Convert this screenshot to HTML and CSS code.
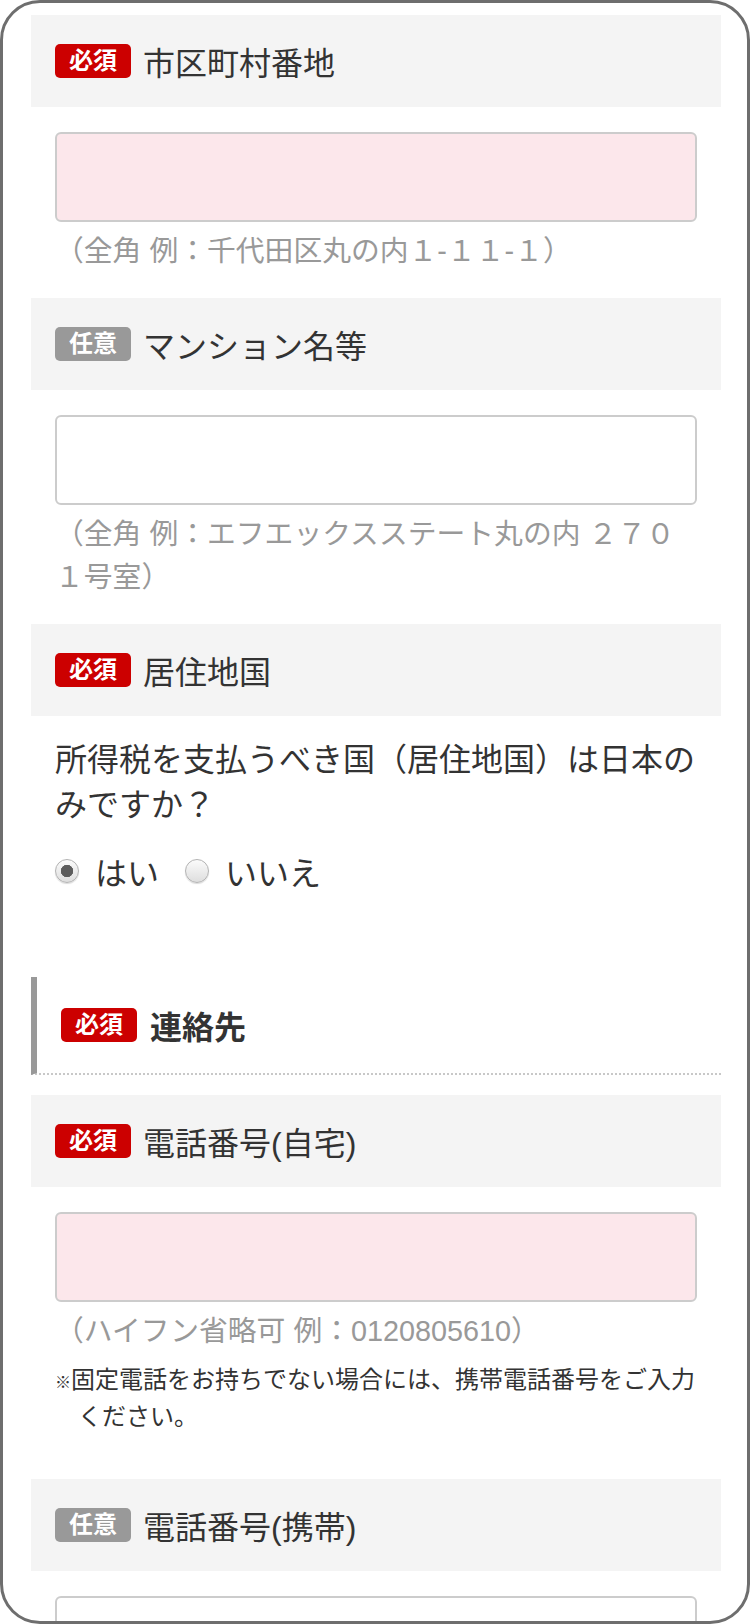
FILE: index.html
```html
<!DOCTYPE html>
<html lang="ja">
<head>
<meta charset="utf-8">
<title>フォーム</title>
<link rel="stylesheet" href="styles.css">
</head>
<body>
<div class="device">
  <div class="form">
    <section class="field">
      <div class="field-head"><span class="badge badge-req">必須</span><span class="field-label">市区町村番地</span></div>
      <div class="field-body">
        <input class="text-input text-input-req" type="text">
        <p class="hint">（全角 例：千代田区丸の内１-１１-１）</p>
      </div>
    </section>

    <section class="field">
      <div class="field-head"><span class="badge badge-opt">任意</span><span class="field-label">マンション名等</span></div>
      <div class="field-body">
        <input class="text-input" type="text">
        <p class="hint">（全角 例：エフエックスステート丸の内 ２７０<wbr>１号室）</p>
      </div>
    </section>

    <section class="field">
      <div class="field-head"><span class="badge badge-req">必須</span><span class="field-label">居住地国</span></div>
      <div class="field-body">
        <p class="question">所得税を支払うべき国（居住地国）は日本のみですか？</p>
        <div class="radio-row">
          <label class="radio-opt"><input class="radio" type="radio" name="res" checked><span>はい</span></label>
          <label class="radio-opt"><input class="radio" type="radio" name="res"><span>いいえ</span></label>
        </div>
      </div>
    </section>

    <h2 class="section-title"><span class="badge badge-req">必須</span><span class="section-title-text">連絡先</span></h2>

    <section class="field">
      <div class="field-head"><span class="badge badge-req">必須</span><span class="field-label">電話番号(自宅)</span></div>
      <div class="field-body">
        <input class="text-input text-input-req" type="text">
        <p class="hint">（ハイフン省略可 例：0120805610）</p>
        <p class="note"><span class="note-mark">※</span>固定電話をお持ちでない場合には、携帯電話番号をご入力ください。</p>
      </div>
    </section>

    <section class="field">
      <div class="field-head"><span class="badge badge-opt">任意</span><span class="field-label">電話番号(携帯)</span></div>
      <div class="field-body">
        <input class="text-input" type="text">
      </div>
    </section>
  </div>
</div>
</body>
</html>
```

FILE: styles.css
```css
html, body {
  margin: 0;
  padding: 0;
  background: #ffffff;
}

body {
  font-family: "Liberation Sans", "Noto Sans CJK JP", sans-serif;
  color: #333333;
}

.device {
  width: 750px;
  height: 1624px;
  box-sizing: border-box;
  border: 3px solid #6e6e6e;
  border-radius: 40px;
  overflow: hidden;
  background: #ffffff;
}

.form {
  padding: 12px 26px 0 28px;
}

.field {
  margin: 0 0 25px;
}

.field-head {
  height: 92px;
  box-sizing: border-box;
  padding: 0 24px;
  background: #f4f4f4;
  display: flex;
  align-items: center;
}

.badge {
  display: inline-flex;
  align-items: center;
  justify-content: center;
  height: 34px;
  padding: 0 14px;
  border-radius: 5px;
  color: #ffffff;
  font-size: 24px;
  font-weight: bold;
  line-height: 34px;
  flex: none;
}

.badge-req {
  background: #cc0000;
}

.badge-opt {
  background: #999999;
}

.field-label {
  margin-left: 12px;
  font-size: 32px;
  color: #333333;
}

.field-body {
  padding: 0 24px;
}

.text-input {
  display: block;
  width: 100%;
  height: 90px;
  box-sizing: border-box;
  margin: 25px 0 0;
  border: 2px solid #cccccc;
  border-radius: 6px;
  background: #ffffff;
  -webkit-appearance: none;
  appearance: none;
  outline: none;
  font-size: 32px;
}

.text-input-req {
  background: #fce7eb;
}

.hint {
  margin: 8px 0 0;
  font-size: 28.8px;
  line-height: 43px;
  color: #999999;
}

.note {
  margin: 10px 0 0;
  padding: 0 0 20px 23px;
  text-indent: -23px;
  font-size: 24px;
  line-height: 34px;
  color: #333333;
}

.note-mark {
  font-size: 16px;
}

.question {
  margin: 22px 0 0;
  font-size: 32px;
  line-height: 45px;
  color: #333333;
}

.radio-row {
  margin-top: 20px;
  height: 45px;
  display: flex;
  align-items: center;
  font-size: 32px;
  color: #333333;
}

.radio-opt {
  display: flex;
  align-items: center;
  margin-right: 26px;
}

.radio {
  -webkit-appearance: none;
  appearance: none;
  width: 24px;
  height: 24px;
  margin: 0 16px 0 0;
  box-sizing: border-box;
  border: 1.5px solid #b3b3b3;
  border-radius: 50%;
  background: linear-gradient(#fbfbfb, #dedede);
  box-shadow: 0 1px 1px rgba(0, 0, 0, 0.15);
  flex: none;
}

.radio:checked {
  background: radial-gradient(circle, #5c5c5c 0, #5c5c5c 5.5px, #666666 6px, transparent 6.5px), linear-gradient(#fbfbfb, #dedede);
}

.section-title {
  margin: 84px 0 20px;
  height: 98px;
  box-sizing: border-box;
  padding-left: 24px;
  border-left: 6px solid #999999;
  border-bottom: 2px dotted #c8c8c8;
  display: flex;
  align-items: center;
  font-size: 32px;
  font-weight: bold;
  color: #333333;
}

.section-title-text {
  margin-left: 13px;
}
```
